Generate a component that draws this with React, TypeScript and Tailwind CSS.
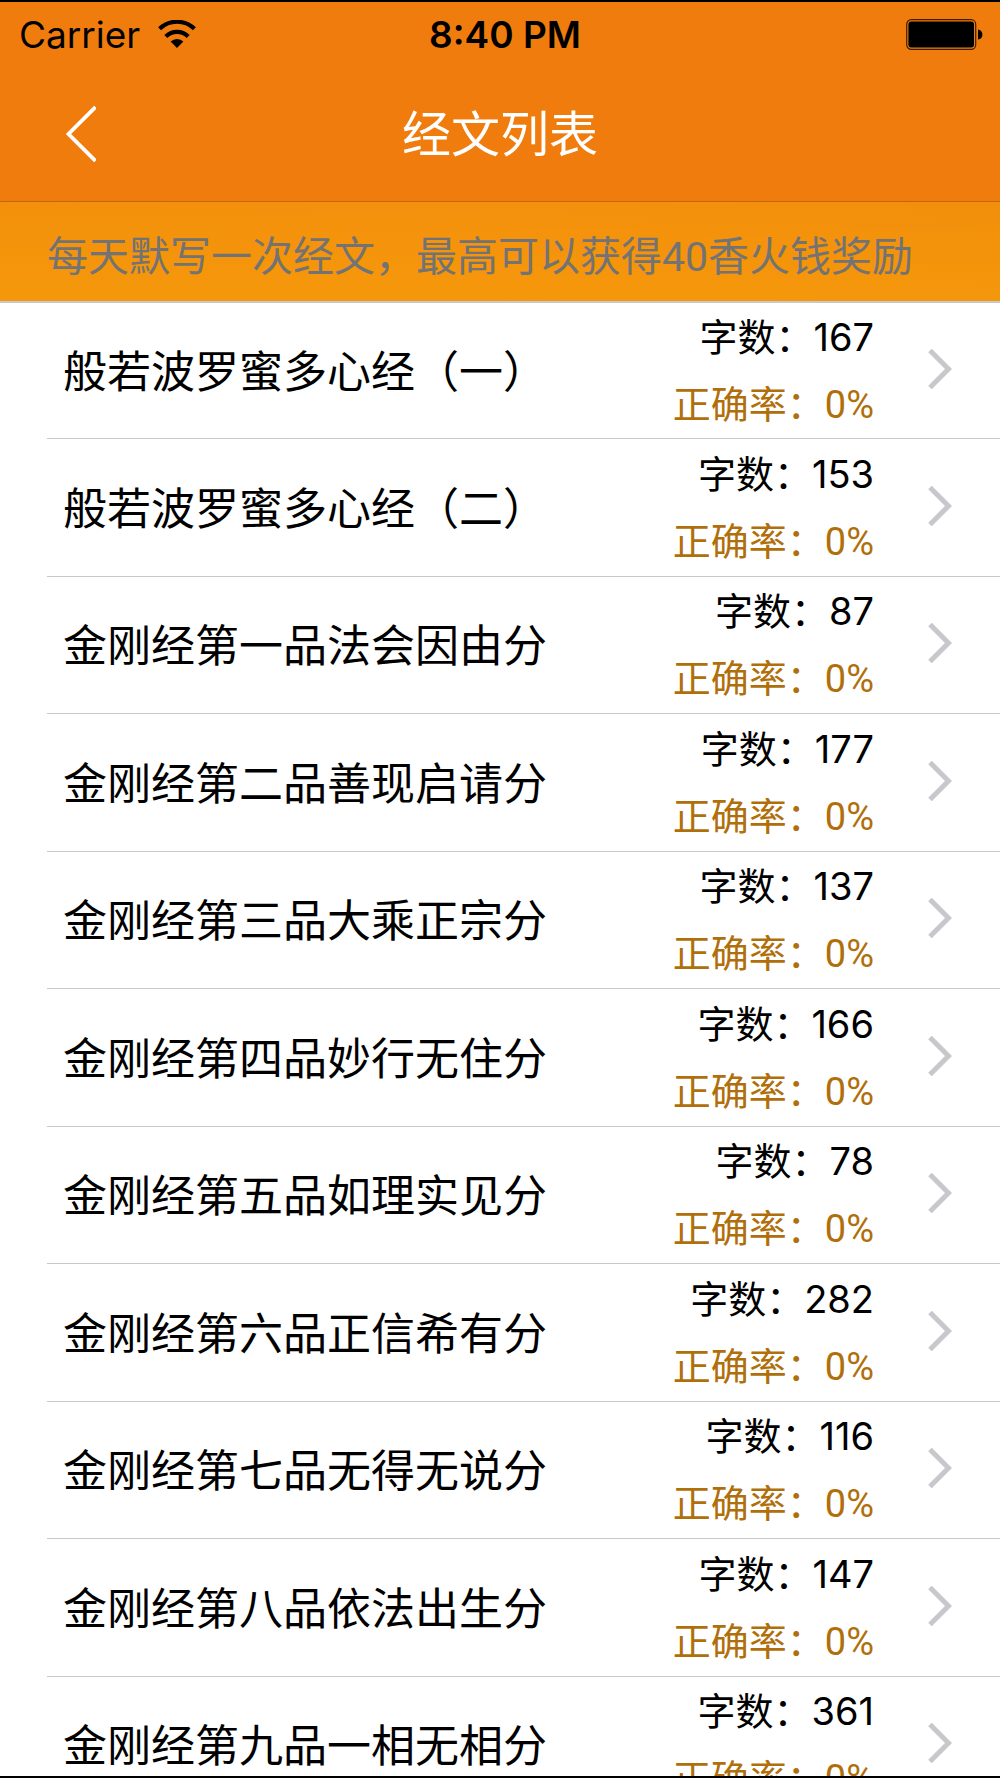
import React from "react";

const sutras = [
  { title: "般若波罗蜜多心经（一）", words: 167, accuracy: 0 },
  { title: "般若波罗蜜多心经（二）", words: 153, accuracy: 0 },
  { title: "金刚经第一品法会因由分", words: 87, accuracy: 0 },
  { title: "金刚经第二品善现启请分", words: 177, accuracy: 0 },
  { title: "金刚经第三品大乘正宗分", words: 137, accuracy: 0 },
  { title: "金刚经第四品妙行无住分", words: 166, accuracy: 0 },
  { title: "金刚经第五品如理实见分", words: 78, accuracy: 0 },
  { title: "金刚经第六品正信希有分", words: 282, accuracy: 0 },
  { title: "金刚经第七品无得无说分", words: 116, accuracy: 0 },
  { title: "金刚经第八品依法出生分", words: 147, accuracy: 0 },
  { title: "金刚经第九品一相无相分", words: 361, accuracy: 0 },
];

function WifiIcon() {
  return (
    <svg width="38" height="28" viewBox="0 0 38 28" fill="none" aria-hidden="true">
      <path d="M1.6 8.8a25 25 0 0 1 34.8 0" stroke="#000" strokeWidth="4.2" />
      <path d="M7.8 16.4a16 16 0 0 1 22.4 0" stroke="#000" strokeWidth="4.2" />
      <path d="M19 28l-6.4-6.5a9.2 9.2 0 0 1 12.8 0z" fill="#000" />
    </svg>
  );
}

function BatteryIcon() {
  return (
    <svg width="77" height="31" viewBox="0 0 77 31" fill="none" aria-hidden="true">
      <rect x="0.7" y="0.7" width="69" height="29.6" rx="4.6" stroke="#000" strokeOpacity="0.75" strokeWidth="1.2" />
      <rect x="2.4" y="2.4" width="65.6" height="26.2" rx="3" fill="#000" />
      <path d="M72 10.4c2.8.4 4.4 2.4 4.4 5.1s-1.6 4.7-4.4 5.1z" fill="#000" />
    </svg>
  );
}

function StatusBar() {
  return (
    <div className="grid grid-cols-3 items-center h-16 pl-[19px] pr-[17px] text-black">
      <div className="flex items-center gap-[18px] text-[37px] leading-none">
        <span>Carrier</span>
        <WifiIcon />
      </div>
      <div className="pl-2 text-center text-[37px] leading-none font-semibold">8:40 PM</div>
      <div className="flex justify-end">
        <BatteryIcon />
      </div>
    </div>
  );
}

function NavBar() {
  return (
    <div className="grid grid-cols-[1fr_auto_1fr] items-center h-[135px] px-12">
      <button type="button" aria-label="返回" className="justify-self-start p-4">
        <svg width="32" height="56" viewBox="0 0 32 56" fill="none" aria-hidden="true">
          <path d="M31.5 1L4.5 28l27 27" stroke="#fff" strokeWidth="3.8" />
        </svg>
      </button>
      <h1 className="pt-0.5 text-[49px] leading-none text-white">经文列表</h1>
    </div>
  );
}

export default function App() {
  return (
    <div className="flex flex-col h-screen overflow-hidden bg-white border-y-2 border-black font-['Inter','Noto_Sans_CJK_SC',sans-serif]">
      <header className="shrink-0 bg-[#f07c0d] border-b border-[#c4660a]">
        <StatusBar />
        <NavBar />
      </header>

      <div className="shrink-0 bg-linear-to-r from-[#f5930e] via-[#f7930f] to-[#f3900d]">
        <p className="h-[99px] pl-[47px] pt-1.5 text-[41px] leading-[99px] whitespace-nowrap text-[#737373] bg-linear-to-b from-[#f08c08]/40 to-[#f59a0a]/70 font-['Roboto','Noto_Sans_CJK_SC',sans-serif]">
          每天默写一次经文，最高可以获得40香火钱奖励
        </p>
      </div>

      <ul className="flex-1 min-h-0 overflow-hidden border-t-2 border-[#c8c7cc]">
        {sutras.map((s) => (
          <li key={s.title} className="pl-[47px] h-[137px] even:h-[138px] first:h-[136px]">
            <a href="#" className="flex items-center h-full pl-4 border-b border-[#c8c7cc]">
              <h2 className="flex-1 pt-0.5 text-[44px] leading-none text-black whitespace-nowrap">{s.title}</h2>
              <div className="text-right text-[38px] leading-[68px] whitespace-nowrap">
                <div className="text-black">字数：{s.words}</div>
                <div className="text-[#b06f0b] font-['Roboto','Noto_Sans_CJK_SC',sans-serif]">正确率：{s.accuracy}%</div>
              </div>
              <svg className="ml-[54px] mr-12 mb-1" width="24" height="40" viewBox="0 0 24 40" fill="none" aria-hidden="true">
                <path d="M2 1.5L20.5 20 2 38.5" stroke="#c7c7cc" strokeWidth="5" />
              </svg>
            </a>
          </li>
        ))}
      </ul>
    </div>
  );
}
